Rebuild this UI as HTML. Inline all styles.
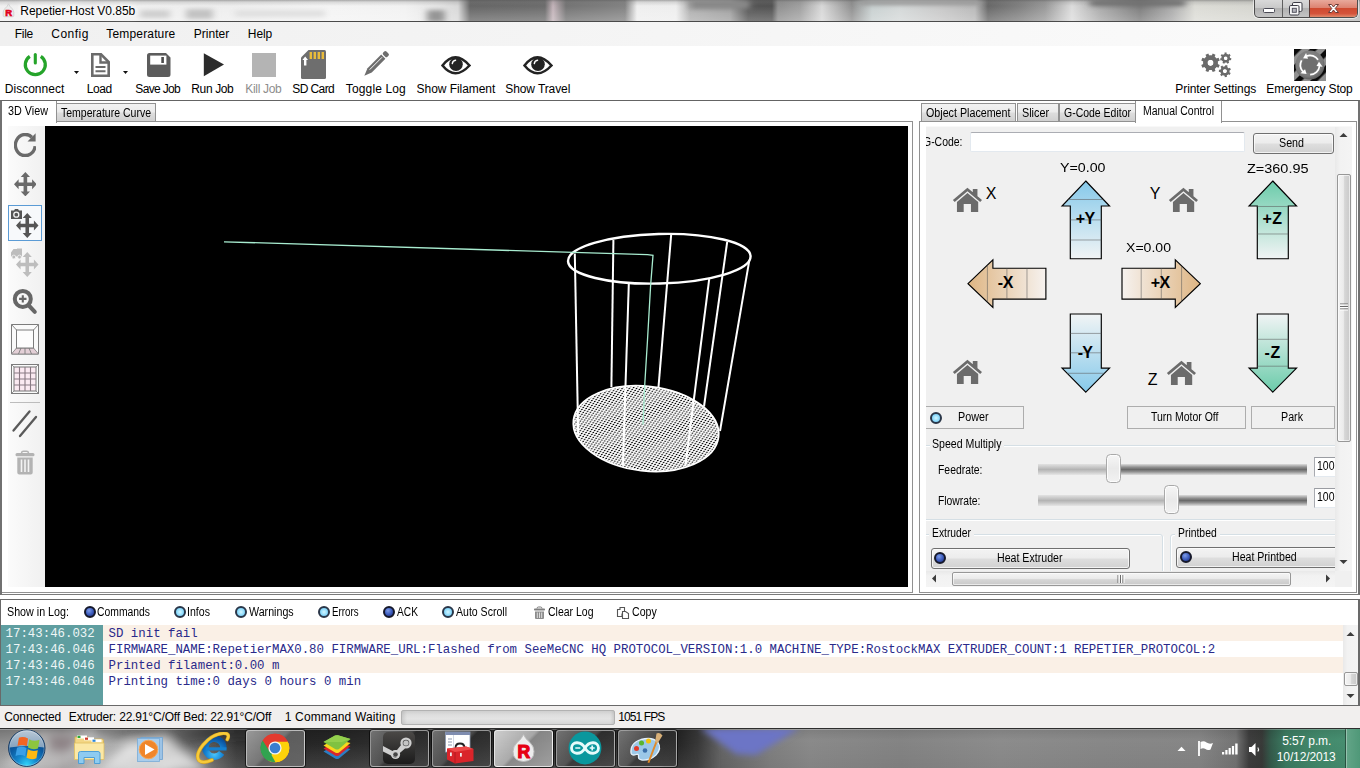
<!DOCTYPE html>
<html><head><meta charset="utf-8"><title>Repetier-Host V0.85b</title>
<style>
*{box-sizing:border-box;margin:0;padding:0}
html,body{width:1360px;height:768px;overflow:hidden;background:#fff}
body{position:relative;font-family:"Liberation Sans",sans-serif;font-size:12px;color:#000}
.a{position:absolute;display:block}
.t{position:absolute;white-space:pre;line-height:1;display:block}

</style></head><body>
<!-- TITLE -->
<div class="a" style="left:0px;top:0px;width:1360px;height:21px;background:linear-gradient(to bottom,rgba(90,90,90,.50) 0,rgba(120,120,120,.22) 2px,rgba(255,255,255,0) 6px,rgba(255,255,255,.22) 20px),linear-gradient(to right,#f0f0f0 0,#f3f3f3 60px,#f0f0f0 140px,#eeeeee 230px,#f4f4f4 330px,#f2f2f2 405px,#e4e4e4 440px,#d8d8d8 458px,#666666 470px,#6c6c6c 545px,#c4b4ba 553px,#747474 566px,#828282 625px,#efefef 637px,#eeeeee 676px,#b0b0b0 690px,#a0a0a0 730px,#545454 748px,#525252 772px,#909090 778px,#a0a0a0 800px,#d8d8d8 822px,#909090 852px,#c8d0d0 872px,#d4d8d8 900px,#c8c8c8 940px,#b8b8b8 975px,#686868 988px,#808080 1020px,#999 1045px,#dcdcdc 1072px,#aaa 1100px,#7c7c7c 1140px,#aaa 1172px,#dcdcd6 1195px,#d6d6d0 1250px,#b8b8b8 1360px)"></div>
<svg class="a" style="left:0;top:0" width="1360" height="21" viewBox="0 0 1360 21"><defs><filter id="tbl" x="-10%" y="-100%" width="120%" height="300%"><feGaussianBlur stdDeviation="3.5 2"/></filter></defs><g filter="url(#tbl)"><rect x="140" y="10" width="30" height="8" fill="#cfcfcf"/><rect x="186" y="9" width="27" height="10" fill="#c2c2c2"/><rect x="235" y="10" width="90" height="7" fill="#e0e0e0"/><rect x="427" y="10" width="18" height="12" fill="#959595"/><rect x="690" y="0" width="60" height="9" fill="#888"/><rect x="1090" y="0" width="95" height="6" fill="#707070"/><rect x="860" y="0" width="120" height="5" fill="#999"/></g></svg>
<div class="a" style="left:0px;top:21px;width:1360px;height:1px;background:#4a4a4a"></div>
<svg class="a" style="left:2px;top:3px;" width="13" height="15" viewBox="0 0 13 15"><path d="M6.500 0.800 Q7.500 3.500 10 5.500 Q11.800 7.300 11.800 9.500 V12.500 a1.200 1.200 0 0 1 -1.200 1.200 H2.400 a1.200 1.200 0 0 1 -1.200 -1.200 V9.500 Q1.200 7.300 3 5.500 Q5.500 3.500 6.500 0.800 Z" fill="#ebebeb" stroke="#c8c8c8" stroke-width=".7"/><text x="6.600" y="12.800" font-family="Liberation Sans,sans-serif" font-weight="bold" font-size="9.500" fill="#e2001a" stroke="#e2001a" stroke-width=".6" text-anchor="middle">R</text></svg>
<span class="t" style="left:20.30px;top:4.84px;font-size:12px;letter-spacing:-0.021px;text-shadow:0 0 5px #fff,0 0 7px #fff,0 0 9px #fff,0 0 12px #fff;">Repetier-Host V0.85b</span>
<div class="a" style="left:1254px;top:0px;width:104px;height:18px;border:1px solid #4d4d4d;border-top:0;border-radius:0 0 5px 5px;overflow:hidden;background:linear-gradient(#d9d9d9 0,#c9c9c9 45%,#b2b2b2 50%,#c4c4c4 100%);box-shadow:0 0 0 1px rgba(255,255,255,.55)"></div>
<div class="a" style="left:1309px;top:0px;width:48px;height:17px;border-radius:0 0 4px 0;background:linear-gradient(#e8a99b 0,#dd8371 45%,#cf4a30 50%,#d4533a 80%,#e08a6c 100%);border-left:1px solid #5a3a36"></div>
<div class="a" style="left:1282px;top:0px;width:1px;height:17px;background:#5f5f5f"></div>
<div class="a" style="left:1263px;top:8px;width:12px;height:5px;background:#fff;border:1px solid #4a4a55;border-radius:1.500px"></div>
<svg class="a" style="left:1288.5px;top:1.5px;" width="15" height="14" viewBox="0 0 15 14"><rect x="3.500" y="0.500" width="9.500" height="9" rx="1.300" fill="#ececec" stroke="#3c3c46" stroke-width="1"/><rect x="5" y="2" width="6.500" height="6" fill="none" stroke="#fff" stroke-width="1.100"/><rect x="0.500" y="3.500" width="9.500" height="9.500" rx="1.300" fill="#f6f6f6" stroke="#3c3c46" stroke-width="1"/><rect x="3.300" y="6.300" width="4" height="4" fill="#b4b4bc" stroke="#4a4a55" stroke-width=".9"/></svg>
<svg class="a" style="left:1327px;top:3px;" width="13" height="11" viewBox="0 0 13 11"><path d="M1.5 1.5 H4.5 L6.5 4 L8.5 1.5 H11.5 L8.2 5.5 L11.5 9.5 H8.5 L6.5 7 L4.5 9.5 H1.5 L4.8 5.5 Z" fill="#fff" stroke="#6a3a36" stroke-width="1"/></svg>
<!-- MENU -->
<div class="a" style="left:0px;top:22px;width:1360px;height:24px;background:linear-gradient(to right,#f0f0f0 0,#f4f4f4 40%,#fbfbfb 100%)"></div>
<span class="t" style="left:14.80px;top:27.84px;font-size:12px;letter-spacing:-0.281px;">File</span>
<span class="t" style="left:51.30px;top:27.84px;font-size:12px;letter-spacing:0.463px;">Config</span>
<span class="t" style="left:106.30px;top:27.84px;font-size:12px;letter-spacing:0.163px;">Temperature</span>
<span class="t" style="left:193.80px;top:27.84px;font-size:12px;letter-spacing:0.026px;">Printer</span>
<span class="t" style="left:247.80px;top:27.84px;font-size:12px;letter-spacing:-0.062px;">Help</span>
<!-- TOOLBAR -->
<div class="a" style="left:0px;top:46px;width:1360px;height:54px;background:#fff"></div>
<span class="t" style="left:4.80px;top:82.84px;font-size:12px;letter-spacing:0.014px;color:#000;">Disconnect</span>
<span class="t" style="left:86.80px;top:82.84px;font-size:12px;letter-spacing:-0.401px;color:#000;">Load</span>
<span class="t" style="left:135.30px;top:82.84px;font-size:12px;letter-spacing:-0.650px;color:#000;">Save Job</span>
<span class="t" style="left:191.30px;top:82.84px;font-size:12px;letter-spacing:-0.367px;color:#000;">Run Job</span>
<span class="t" style="left:245.30px;top:82.84px;font-size:12px;letter-spacing:-0.312px;color:#8d8d8d;">Kill Job</span>
<span class="t" style="left:292.30px;top:82.84px;font-size:12px;letter-spacing:-0.586px;color:#000;">SD Card</span>
<span class="t" style="left:345.80px;top:82.84px;font-size:12px;letter-spacing:0.142px;color:#000;">Toggle Log</span>
<span class="t" style="left:416.60px;top:82.84px;font-size:12px;letter-spacing:-0.056px;color:#000;">Show Filament</span>
<span class="t" style="left:505.30px;top:82.84px;font-size:12px;letter-spacing:-0.103px;color:#000;">Show Travel</span>
<span class="t" style="left:1175.30px;top:82.84px;font-size:12px;letter-spacing:-0.070px;color:#000;">Printer Settings</span>
<span class="t" style="left:1266.30px;top:82.84px;font-size:12px;letter-spacing:-0.171px;color:#000;">Emergency Stop</span>
<svg class="a" style="left:22px;top:51px;" width="28" height="28" viewBox="0 0 28 28"><path d="M7.800 5.300 A10 10 0 1 0 18.800 5.300" fill="none" stroke="#25a42a" stroke-width="3.200" stroke-linecap="butt"/><path d="M13.300 3.500 V12" stroke="#25a42a" stroke-width="3.100" stroke-linecap="round"/></svg>
<svg class="a" style="left:72.5px;top:70px;" width="7" height="5" viewBox="0 0 7 5"><path d="M1 1 H6 L3.5 4 Z" fill="#111"/></svg>
<svg class="a" style="left:121.5px;top:70px;" width="7" height="5" viewBox="0 0 7 5"><path d="M1 1 H6 L3.5 4 Z" fill="#111"/></svg>
<svg class="a" style="left:90px;top:52px;" width="22" height="26" viewBox="0 0 22 26"><path d="M2.3 2.3 H11 L18.7 10 V23.7 H2.3 Z" fill="#fff" stroke="#6b6b6b" stroke-width="2.6" stroke-linejoin="miter"/><path d="M10.5 2.5 V10.5 H18.5" fill="none" stroke="#6b6b6b" stroke-width="2.4"/><path d="M5.5 15 H15.5 M5.5 19.2 H15.5" stroke="#6b6b6b" stroke-width="2"/></svg>
<svg class="a" style="left:146px;top:52px;" width="26" height="26" viewBox="0 0 26 26"><path d="M1 3.5 a2.5 2.5 0 0 1 2.500 -2.5 H20 L24.500 5.5 V22.5 a2.500 2.500 0 0 1 -2.500 2.500 H3.500 a2.500 2.500 0 0 1 -2.500 -2.500 Z" fill="#5c5c5c"/><rect x="4.2" y="3.6" width="16.2" height="9" fill="#fff"/><rect x="15.3" y="5" width="2.6" height="6" fill="#4a4a4a"/></svg>
<svg class="a" style="left:202px;top:52px;" width="24" height="26" viewBox="0 0 24 26"><path d="M1.8 1.2 L22 12.6 L1.8 24.2 Z" fill="#2b2b2b"/></svg>
<div class="a" style="left:252px;top:53px;width:24px;height:24px;background:#b4b4b4"></div>
<svg class="a" style="left:300px;top:49px;" width="27" height="31" viewBox="0 0 27 31"><path d="M8.5 1 H24.500 a1.5 1.5 0 0 1 1.500 1.500 V28.5 a1.5 1.5 0 0 1 -1.500 1.500 H2.500 a1.500 1.500 0 0 1 -1.500 -1.500 V8.5 Z" fill="#6e6e6e"/><path d="M9.6 3 h2.400 v7 h-2.400z M13.600 3 h2.400 v7 h-2.400z M17.600 3 h2.400 v7 h-2.400z M21.600 3 h2.400 v7 h-2.400z" fill="#e9bb3a"/><path d="M5.200 7.5 L8 11 H6.400 V16.500 H4 V11 H2.400 Z" fill="#fff"/></svg>
<svg class="a" style="left:362px;top:50px;" width="28" height="28" viewBox="0 0 28 28"><g transform="rotate(45 14 14)" fill="#6e6e6e"><rect x="11" y="-2.2" width="6" height="4.600" rx="1.600"/><path d="M11 3.700 H17 V23 L14 30.500 L11 23 Z"/><path d="M13.500 5 V22.500" stroke="#fff" stroke-width=".9" fill="none"/></g></svg>
<svg class="a" style="left:441px;top:55px;" width="30" height="21" viewBox="0 0 30 21"><path d="M1.500 10.500 Q14 -6 28.500 10.500 Q14 26 1.500 10.500 Z" fill="#fff" stroke="#232323" stroke-width="2.500"/><circle cx="15" cy="9.300" r="6.800" fill="#232323"/><path d="M11.300 8.600 A3.800 3.800 0 0 1 14.600 5.200" fill="none" stroke="#fff" stroke-width="1.400" stroke-linecap="round"/></svg>
<svg class="a" style="left:523px;top:55px;" width="30" height="21" viewBox="0 0 30 21"><path d="M1.500 10.500 Q14 -6 28.500 10.500 Q14 26 1.500 10.500 Z" fill="#fff" stroke="#232323" stroke-width="2.500"/><circle cx="15" cy="9.300" r="6.800" fill="#232323"/><path d="M11.300 8.600 A3.800 3.800 0 0 1 14.600 5.200" fill="none" stroke="#fff" stroke-width="1.400" stroke-linecap="round"/></svg>
<svg class="a" style="left:1200px;top:50px;" width="34" height="30" viewBox="0 0 34 30"><path fill-rule="evenodd" d="M17.69,14.06 L19.74,15.01 L18.59,17.77 L16.47,17.00 L14.70,18.77 L15.47,20.89 L12.71,22.04 L11.76,19.99 L9.24,19.99 L8.29,22.04 L5.53,20.89 L6.30,18.77 L4.53,17.00 L2.41,17.77 L1.26,15.01 L3.31,14.06 L3.31,11.54 L1.26,10.59 L2.41,7.83 L4.53,8.60 L6.30,6.83 L5.53,4.71 L8.29,3.56 L9.24,5.61 L11.76,5.61 L12.71,3.56 L15.47,4.71 L14.70,6.83 L16.47,8.60 L18.59,7.83 L19.74,10.59 L17.69,11.54 Z M13.6,12.8 a3.1,3.1 0 1 0 -6.2,0 a3.1,3.1 0 1 0 6.2,0 Z" fill="#6b6b6b"/><circle cx="10.5" cy="12.8" r="5.20" fill="none" stroke="#6b6b6b" stroke-width="4.20"/><path fill-rule="evenodd" d="M29.89,7.98 L31.40,8.31 L30.99,10.32 L29.48,10.03 L28.48,11.35 L29.17,12.72 L27.34,13.66 L26.62,12.30 L24.98,12.34 L24.33,13.73 L22.46,12.89 L23.07,11.48 L22.01,10.21 L20.52,10.57 L20.01,8.59 L21.50,8.19 L21.83,6.57 L20.61,5.63 L21.85,3.99 L23.09,4.91 L24.56,4.16 L24.54,2.62 L26.59,2.57 L26.64,4.11 L28.15,4.79 L29.34,3.81 L30.66,5.38 L29.49,6.39 Z M27.7,8.2 a2,2 0 1 0 -4,0 a2,2 0 1 0 4,0 Z" fill="#6b6b6b"/><circle cx="25.7" cy="8.2" r="3.10" fill="none" stroke="#6b6b6b" stroke-width="2.20"/><path fill-rule="evenodd" d="M29.26,22.21 L30.69,23.01 L29.64,24.94 L28.19,24.17 L26.75,25.20 L27.02,26.82 L24.85,27.20 L24.55,25.59 L22.85,25.11 L21.75,26.32 L20.10,24.87 L21.17,23.62 L20.49,21.99 L18.85,21.89 L18.96,19.70 L20.60,19.76 L21.45,18.21 L20.51,16.86 L22.30,15.58 L23.27,16.91 L25.01,16.60 L25.48,15.03 L27.59,15.62 L27.16,17.21 L28.49,18.38 L30.01,17.76 L30.86,19.79 L29.35,20.44 Z M27.099999999999998,21.1 a2.2,2.2 0 1 0 -4.4,0 a2.2,2.2 0 1 0 4.4,0 Z" fill="#6b6b6b"/><circle cx="24.9" cy="21.1" r="3.35" fill="none" stroke="#6b6b6b" stroke-width="2.30"/></svg>
<svg class="a" style="left:1294px;top:49px;" width="32" height="32" viewBox="0 0 32 32"><defs><pattern id="esp" width="11.310" height="11.310" patternUnits="userSpaceOnUse" patternTransform="rotate(45)"><rect width="11.310" height="11.310" fill="#0a0a0a"/><rect x="5.300" width="6.010" height="11.310" fill="#909090"/></pattern><radialGradient id="esr" cx=".45" cy=".4" r=".6"><stop offset="0" stop-color="#8a8a8a"/><stop offset=".8" stop-color="#7a7a7a"/><stop offset="1" stop-color="#5c5c5c"/></radialGradient></defs><rect width="32" height="32" fill="url(#esp)"/><circle cx="15.900" cy="16" r="14.600" fill="url(#esr)"/><circle cx="16" cy="16" r="8.200" fill="#6e6e6e"/><g fill="none" stroke="#fff" stroke-width="1.700"><path d="M12.72 6.98 A9.6 9.6 0 0 1 24.05 10.77"/><path d="M25.55 17.00 A9.6 9.6 0 0 1 16.17 25.60"/><path d="M8.98 22.55 A9.6 9.6 0 0 1 7.60 11.35"/></g><g fill="#fff"><path d="M13.99 9.82 L12.08 3.92 L9.09 9.33 Z"/><path d="M22.44 16.90 L28.58 17.77 L25.02 12.72 Z"/><path d="M11.09 20.26 L6.42 24.33 L12.56 24.96 Z"/></g></svg>
<!-- LEFT -->
<div class="a" style="left:0px;top:100px;width:1360px;height:495px;border:1px solid #7a7a7a;border-top:1px solid #646464;border-left:2px solid #717171;border-right:2px solid #717171;background:#fff"></div>
<div class="a" style="left:2px;top:121px;width:911px;height:472px;border:1px solid #919191;border-left:0;background:#fff"></div>
<div class="a" style="left:2px;top:101px;width:55px;height:22px;background:#fff;border-right:1px solid #919191"></div>
<span class="t" style="left:8.30px;top:104.84px;font-size:12px;transform:scaleX(0.8995);transform-origin:0 0;">3D View</span>
<div class="a" style="left:56px;top:103px;width:100px;height:19px;border:1px solid #919191;background:linear-gradient(#f2f2f2 0,#ebebeb 48%,#dddddd 52%,#d0d0d0 100%)"></div>
<span class="t" style="left:61.30px;top:106.84px;font-size:12px;transform:scaleX(0.8762);transform-origin:0 0;">Temperature Curve</span>
<div class="a" style="left:8px;top:126px;width:37px;height:461px;background:linear-gradient(to right,#fbfbfb,#f0f0f0)"></div>
<svg class="a" style="left:13.5px;top:132.9px;" width="22.6" height="24.1" viewBox="0 0 24 24" preserveAspectRatio="none"><path d="M19.030 4.200 A10.500 10.500 0 1 0 22.440 13.100" fill="none" stroke="#6a6a6a" stroke-width="3.500"/><path d="M23 0.200 V8.400 H14.350 Z" fill="#6a6a6a"/></svg>
<svg class="a" style="left:13.5px;top:171.9px;" width="22.75" height="24.4" viewBox="0 0 22.600 24.400" preserveAspectRatio="none"><path fill="#6a6a6a" d="M11.300 0 L15.900 5 H13.100 V10.400 H18 V7.200 L22.600 12.200 L18 17.200 V14 H13.100 V19.400 H15.900 L11.300 24.400 L6.700 19.400 H9.500 V14 H4.600 V17.200 L0 12.200 L4.600 7.200 V10.400 H9.500 V5 H6.700 Z"/></svg>
<div class="a" style="left:8px;top:205px;width:34px;height:36px;border:1px solid #5b9bd5;background:#f7f9fb"></div>
<svg class="a" style="left:16px;top:213px;" width="22.5" height="25" viewBox="0 0 22.600 24.400" preserveAspectRatio="none"><path fill="#555" d="M11.300 0 L15.900 5 H13.100 V10.400 H18 V7.200 L22.600 12.200 L18 17.200 V14 H13.100 V19.400 H15.900 L11.300 24.400 L6.700 19.400 H9.500 V14 H4.600 V17.200 L0 12.200 L4.600 7.200 V10.400 H9.500 V5 H6.700 Z"/></svg>
<svg class="a" style="left:9.8px;top:207.7px;" width="13" height="12" viewBox="0 0 13 12"><path d="M1 2.500 H4 L5 1 H8 L9 2.500 H12 V11 H1 Z" fill="#555"/><circle cx="6.300" cy="6.700" r="2.500" fill="none" stroke="#f4f4f4" stroke-width="1.300"/></svg>
<svg class="a" style="left:16px;top:252.3px;" width="22.5" height="25" viewBox="0 0 22.600 24.400" preserveAspectRatio="none"><path fill="#bdbdbd" d="M11.300 0 L15.900 5 H13.100 V10.400 H18 V7.200 L22.600 12.200 L18 17.200 V14 H13.100 V19.400 H15.900 L11.300 24.400 L6.700 19.400 H9.500 V14 H4.600 V17.200 L0 12.200 L4.600 7.200 V10.400 H9.500 V5 H6.700 Z"/></svg>
<svg class="a" style="left:9.8px;top:248px;" width="13" height="12" viewBox="0 0 13 12"><path d="M1 4.500 L3.500 1 H7 V0.500 H12 V8.500 H1 Z" fill="#bdbdbd"/><circle cx="3.800" cy="9" r="1.900" fill="#bdbdbd" stroke="#f4f4f4" stroke-width=".8"/><circle cx="9.500" cy="9" r="1.900" fill="#bdbdbd" stroke="#f4f4f4" stroke-width=".8"/></svg>
<svg class="a" style="left:11px;top:286px;" width="28" height="30" viewBox="0 0 28 30"><circle cx="11.800" cy="12.900" r="8" fill="none" stroke="#666" stroke-width="4"/><path d="M17.800 19.500 L23.800 25.800" stroke="#666" stroke-width="4" stroke-linecap="round"/><path d="M11.800 9.200 V16.600 M8.100 12.900 H15.500" stroke="#666" stroke-width="2.100"/></svg>
<svg class="a" style="left:10px;top:323px;" width="30" height="33" viewBox="0 0 30 33"><path d="M1.500 1.500 H28.500 V31 H1.500 Z" fill="#fafafa" stroke="#7c7c7c" stroke-width="1"/><path d="M1.500 25 L6.500 25 L23.500 25 L28.500 31 H1.500 L6.500 25" fill="#e8d6dc" stroke="none"/><path d="M1.500 31 L6.500 25 H23.500 L28.500 31 Z" fill="#e3cfd6" stroke="#7c7c7c" stroke-width=".8"/><rect x="6.500" y="7" width="17" height="18" fill="#fdfdfd" stroke="#7c7c7c" stroke-width="1"/><path d="M1.500 1.500 L6.500 7 M28.500 1.500 L23.500 7 M11 25 L8.500 31 M15 25 V31 M19 25 L21.500 31" stroke="#7c7c7c" stroke-width=".9" fill="none"/></svg>
<svg class="a" style="left:10px;top:363px;" width="30" height="32" viewBox="0 0 30 32"><rect x="1.500" y="1.500" width="27" height="29" fill="#fbfbfb" stroke="#7c7c7c" stroke-width="1"/><rect x="4" y="4" width="22" height="24" fill="#fbeaf2" stroke="#777" stroke-width="1"/><path d="M1.500 1.500 L4 4 M28.500 1.500 L26 4 M1.500 30.500 L4 28 M28.500 30.500 L26 28" stroke="#7c7c7c" stroke-width=".8"/><path d="M9.500 4 V28 M15 4 V28 M20.500 4 V28 M4 10 H26 M4 16 H26 M4 22 H26" stroke="#8a7a84" stroke-width="1.100" fill="none"/></svg>
<div class="a" style="left:10px;top:402px;width:30px;height:1px;background:#bcbcbc"></div>
<svg class="a" style="left:11px;top:409px;" width="28" height="30" viewBox="0 0 28 30"><path d="M2.500 21.500 L18.500 2.500 M9 27 L25 8" stroke="#5a5a5a" stroke-width="2.300" stroke-linecap="round"/></svg>
<svg class="a" style="left:14px;top:450px;" width="22" height="26" viewBox="0 0 22 26"><path d="M7.500 3 a2 2 0 0 1 2 -1.800 h3 a2 2 0 0 1 2 1.800" fill="none" stroke="#b3b3b3" stroke-width="1.500"/><rect x="1.500" y="3" width="19" height="3.200" rx="1.500" fill="#b3b3b3"/><path d="M3.300 7.500 H18.700 V22.500 a2 2 0 0 1 -2 2 H5.300 a2 2 0 0 1 -2 -2 Z" fill="#b3b3b3"/><path d="M7.500 9.500 V22 M11 9.500 V22 M14.500 9.500 V22" stroke="#f4f4f4" stroke-width="1.600"/></svg>
<!-- VIEW3D -->
<div class="a" style="left:45px;top:126px;width:863px;height:461px;background:#000"></div>
<svg class="a" style="left:45px;top:126px" width="863" height="461" viewBox="45 126 863 461"><defs><pattern id="gr" width="1" height="1" patternUnits="userSpaceOnUse" patternTransform="matrix(2.960 0.592 -1.210 2.100 0 0)"><rect width="1" height="1" fill="#fff"/><rect x=".22" y=".27" width=".55" height=".46" fill="#000"/></pattern></defs><ellipse cx="646" cy="428.600" rx="73" ry="42.300" transform="rotate(6.600 646 428.600)" fill="url(#gr)" stroke="#fff" stroke-width="1.800"/><path d="M529.8 127.6 L533.2 309.7" stroke="#fff" stroke-width="2" fill="none" transform="translate(45 126)"/><path d="M568.4 114.0 L566.4 261.0" stroke="#fff" stroke-width="2" fill="none" transform="translate(45 126)"/><path d="M583.8 158.0 L577.9 339.8" stroke="#fff" stroke-width="2" fill="none" transform="translate(45 126)"/><path d="M626.2 108.4 L613.5 261.0" stroke="#fff" stroke-width="2" fill="none" transform="translate(45 126)"/><path d="M664.2 153.0 L640.4 339.8" stroke="#fff" stroke-width="2" fill="none" transform="translate(45 126)"/><path d="M682.2 115.9 L659.0 280.5" stroke="#fff" stroke-width="2" fill="none" transform="translate(45 126)"/><path d="M704.4 133.8 L675.0 305.0" stroke="#fff" stroke-width="2" fill="none" transform="translate(45 126)"/><ellipse cx="659.300" cy="258.750" rx="91.300" ry="24.800" transform="rotate(-1.500 659.300 258.750)" fill="none" stroke="#fff" stroke-width="2.400"/><path d="M224 241.800 L647.500 254.700 L653 255.300 L650.600 285.600 L647.500 340 L644.800 383.750 L643 424.800" fill="none" stroke="#a8ecd0" stroke-width="1.300"/></svg>
<!-- RIGHT -->
<div class="a" style="left:919px;top:121px;width:438px;height:472px;border:1px solid #919191;background:#fff"></div>
<div class="a" style="left:921px;top:103px;width:95px;height:19px;border:1px solid #919191;background:linear-gradient(#f2f2f2 0,#ebebeb 48%,#dddddd 52%,#d0d0d0 100%)"></div>
<span class="t" style="left:925.80px;top:106.84px;font-size:12px;transform:scaleX(0.8921);transform-origin:0 0;">Object Placement</span>
<div class="a" style="left:1017px;top:103px;width:42px;height:19px;border:1px solid #919191;background:linear-gradient(#f2f2f2 0,#ebebeb 48%,#dddddd 52%,#d0d0d0 100%)"></div>
<span class="t" style="left:1022.30px;top:106.84px;font-size:12px;transform:scaleX(0.8995);transform-origin:0 0;">Slicer</span>
<div class="a" style="left:1059px;top:103px;width:78px;height:19px;border:1px solid #919191;background:linear-gradient(#f2f2f2 0,#ebebeb 48%,#dddddd 52%,#d0d0d0 100%)"></div>
<span class="t" style="left:1064.30px;top:106.84px;font-size:12px;transform:scaleX(0.8735);transform-origin:0 0;">G-Code Editor</span>
<div class="a" style="left:1135px;top:101px;width:87px;height:22px;background:#fff;border:1px solid #919191;border-top:0;border-bottom:0"></div>
<span class="t" style="left:1142.80px;top:104.84px;font-size:12px;transform:scaleX(0.8725);transform-origin:0 0;">Manual Control</span>
<div class="a" style="left:926px;top:126px;width:426px;height:461px;background:#f0f0f0;border-top:1px solid #f8f8f8"></div>
<div class="a" style="left:926px;top:127px;width:409px;height:444px;overflow:hidden"><span class="t" style="left:-3.20px;top:8.84px;font-size:12px;transform:scaleX(0.8708);transform-origin:0 0;">G-Code:</span><div class="a" style="left:44px;top:5px;width:275px;height:20px;background:#fff;border:1px solid #e3e9ef;border-top-color:#abadb3;border-radius:2px"></div><div class="a" style="left:327px;top:6px;width:81px;height:21px;border:1px solid #707070;border-radius:3px;background:linear-gradient(#f3f3f3 0,#ececec 48%,#dedede 52%,#d1d1d1 100%);box-shadow:inset 0 0 0 1px rgba(255,255,255,.7)"></div><span class="t" style="left:353.30px;top:10.34px;font-size:12px;transform:scaleX(0.8919);transform-origin:0 0;">Send</span><span class="t" style="left:134.30px;top:34.30px;font-size:13px;transform:scaleX(1.0943);transform-origin:0 0;">Y=0.00</span><span class="t" style="left:321.30px;top:34.50px;font-size:13px;transform:scaleX(1.1122);transform-origin:0 0;">Z=360.95</span><span class="t" style="left:200.30px;top:113.60px;font-size:13px;transform:scaleX(1.0823);transform-origin:0 0;">X=0.00</span><span class="t" style="left:59.80px;top:59.46px;font-size:16px;letter-spacing:1.828px;">X</span><span class="t" style="left:223.80px;top:59.46px;font-size:16px;letter-spacing:1.828px;">Y</span><span class="t" style="left:221.80px;top:244.86px;font-size:16px;letter-spacing:1.719px;">Z</span><svg class="a" style="left:27.299999999999955px;top:61px;overflow:visible" width="29" height="24" viewBox="0 0 29 24"><path d="M14.450 -0.300 L29 11.900 L27.200 13.900 L14.450 3.300 L1.700 13.900 L-0.100 11.900 Z M19.800 0.900 H24.450 V9.500 L19.800 5.300 Z" fill="#6b6b6b"/><path d="M14.450 5 L25.200 14 V24 H17.950 V16.100 H10.700 V24 H3.950 V14 Z" fill="#6b6b6b"/></svg><svg class="a" style="left:243.4000000000001px;top:61px;overflow:visible" width="29" height="24" viewBox="0 0 29 24"><path d="M14.450 -0.300 L29 11.900 L27.200 13.900 L14.450 3.300 L1.700 13.900 L-0.100 11.900 Z M19.800 0.900 H24.450 V9.500 L19.800 5.300 Z" fill="#6b6b6b"/><path d="M14.450 5 L25.200 14 V24 H17.950 V16.100 H10.700 V24 H3.950 V14 Z" fill="#6b6b6b"/></svg><svg class="a" style="left:27.200000000000045px;top:232.8px;overflow:visible" width="29" height="24" viewBox="0 0 29 24"><path d="M14.450 -0.300 L29 11.900 L27.200 13.900 L14.450 3.300 L1.700 13.900 L-0.100 11.900 Z M19.800 0.900 H24.450 V9.500 L19.800 5.300 Z" fill="#6b6b6b"/><path d="M14.450 5 L25.200 14 V24 H17.950 V16.100 H10.700 V24 H3.950 V14 Z" fill="#6b6b6b"/></svg><svg class="a" style="left:241px;top:233.60000000000002px;overflow:visible" width="29" height="24" viewBox="0 0 29 24"><path d="M14.450 -0.300 L29 11.900 L27.200 13.900 L14.450 3.300 L1.700 13.900 L-0.100 11.900 Z M19.800 0.900 H24.450 V9.500 L19.800 5.300 Z" fill="#6b6b6b"/><path d="M14.450 5 L25.200 14 V24 H17.950 V16.100 H10.700 V24 H3.950 V14 Z" fill="#6b6b6b"/></svg><svg class="a" style="left:133.2px;top:50.5px" width="53.5" height="83.8" viewBox="1059.2 177.5 53.5 83.8"><defs><linearGradient id="ay1" x1="0" y1="0" x2="0" y2="1"><stop offset="0" stop-color="#86c9ea"/><stop offset="1" stop-color="#f1f4f5"/></linearGradient></defs><path d="M1086 180.5 L1109.75 205.5 H1101.5 V258.3 H1070.5 V205.5 H1062.25 Z" fill="url(#ay1)" stroke="#000" stroke-width="1.150" stroke-linejoin="miter"/><path d="M1068.4 199 H1103.6 M1070.5 219.4 H1101.5 M1070.5 239.5 H1101.5 " stroke="rgba(90,90,90,.6)" stroke-width=".9" fill="none"/></svg><svg class="a" style="left:320.2px;top:50.5px" width="53.5" height="83.8" viewBox="1246.2 177.5 53.5 83.8"><defs><linearGradient id="az1" x1="0" y1="0" x2="0" y2="1"><stop offset="0" stop-color="#6bcbaa"/><stop offset="1" stop-color="#f1f4f5"/></linearGradient></defs><path d="M1273 180.5 L1296.75 205.5 H1288.5 V258.3 H1257.5 V205.5 H1249.25 Z" fill="url(#az1)" stroke="#000" stroke-width="1.150" stroke-linejoin="miter"/><path d="M1257.5 206 H1288.5 M1257.5 233.5 H1288.5 " stroke="rgba(90,90,90,.6)" stroke-width=".9" fill="none"/></svg><svg class="a" style="left:133.2px;top:184.2px" width="53.5" height="84.1" viewBox="1059.2 311.2 53.5 84.1"><defs><linearGradient id="ay2" x1="0" y1="0" x2="0" y2="1"><stop offset="0" stop-color="#f1f4f5"/><stop offset="1" stop-color="#86c9ea"/></linearGradient></defs><path d="M1086 392.3 L1109.75 368.4 H1101.5 V314.2 H1070.5 V368.4 H1062.25 Z" fill="url(#ay2)" stroke="#000" stroke-width="1.150" stroke-linejoin="miter"/><path d="M1070.5 333.6 H1101.5 M1070.5 353 H1101.5 M1067.3 373.5 H1104.7 " stroke="rgba(90,90,90,.6)" stroke-width=".9" fill="none"/></svg><svg class="a" style="left:320.2px;top:184.2px" width="53.5" height="84.1" viewBox="1246.2 311.2 53.5 84.1"><defs><linearGradient id="az2" x1="0" y1="0" x2="0" y2="1"><stop offset="0" stop-color="#f1f4f5"/><stop offset="1" stop-color="#6bcbaa"/></linearGradient></defs><path d="M1273 392.3 L1296.75 368.4 H1288.5 V314.2 H1257.5 V368.4 H1249.25 Z" fill="url(#az2)" stroke="#000" stroke-width="1.150" stroke-linejoin="miter"/><path d="M1257.5 339.5 H1288.5 M1257.5 366.4 H1288.5 " stroke="rgba(90,90,90,.6)" stroke-width=".9" fill="none"/></svg><svg class="a" style="left:38.6px;top:129.8px" width="83.9" height="53.5" viewBox="964.6 256.8 83.9 53.5"><defs><linearGradient id="ax1" x1="0" y1="0" x2="1" y2="0"><stop offset="0" stop-color="#deb583"/><stop offset="1" stop-color="#f6f2ef"/></linearGradient></defs><path d="M967.6 283.5 L992.5 259.75 V268.0 H1045.5 V299.0 H992.5 V307.25 Z" fill="url(#ax1)" stroke="#000" stroke-width="1.150" stroke-linejoin="miter"/><path d="M987 265.0 V302.0 M1006.5 268.0 V299.0 M1026.6 268.0 V299.0 " stroke="rgba(90,90,90,.6)" stroke-width=".9" fill="none"/></svg><svg class="a" style="left:193.3px;top:129.8px" width="84.3" height="53.5" viewBox="1119.3 256.8 84.3 53.5"><defs><linearGradient id="ax2" x1="0" y1="0" x2="1" y2="0"><stop offset="0" stop-color="#f6f2ef"/><stop offset="1" stop-color="#deb583"/></linearGradient></defs><path d="M1200.6 283.5 L1175.6 259.75 V268.0 H1122.3 V299.0 H1175.6 V307.25 Z" fill="url(#ax2)" stroke="#000" stroke-width="1.150" stroke-linejoin="miter"/><path d="M1141.5 268.0 V299.0 M1161.6 268.0 V299.0 M1181.9 265.7 V301.3 " stroke="rgba(90,90,90,.6)" stroke-width=".9" fill="none"/></svg><span class="t" style="left:149.80px;top:84.16px;font-size:16px;letter-spacing:-0.516px;font-weight:bold;">+Y</span><span class="t" style="left:336.60px;top:84.16px;font-size:16px;letter-spacing:0.375px;font-weight:bold;">+Z</span><span class="t" style="left:151.80px;top:218.16px;font-size:16px;letter-spacing:-1.000px;font-weight:bold;">-Y</span><span class="t" style="left:338.60px;top:218.16px;font-size:16px;letter-spacing:0.491px;font-weight:bold;">-Z</span><span class="t" style="left:71.80px;top:148.06px;font-size:16px;letter-spacing:-0.500px;font-weight:bold;">-X</span><span class="t" style="left:224.80px;top:148.06px;font-size:16px;letter-spacing:-0.516px;font-weight:bold;">+X</span><div class="a" style="left:-26px;top:279px;width:124px;height:23px;border:1px solid #adadad;background:#f0f0f0"></div><div class="a" style="left:201px;top:279px;width:119px;height:23px;border:1px solid #adadad;background:#f0f0f0"></div><div class="a" style="left:325px;top:279px;width:84px;height:23px;border:1px solid #adadad;background:#f0f0f0"></div><span class="t" style="left:31.80px;top:284.34px;font-size:12px;transform:scaleX(0.8966);transform-origin:0 0;">Power</span><span class="t" style="left:225.30px;top:284.34px;font-size:12px;transform:scaleX(0.8726);transform-origin:0 0;">Turn Motor Off</span><span class="t" style="left:354.80px;top:284.34px;font-size:12px;transform:scaleX(0.8911);transform-origin:0 0;">Park</span><div class="a" style="left:4px;top:285px;width:12px;height:12px;border-radius:50%;border:2px solid #2a3648;background:radial-gradient(circle at 50% 50%,#d4f6ff 0,#8fdcfc 55%,#5fb4e8 100%)"></div><div class="a" style="left:-6px;top:318px;width:430px;height:75px;border:1px solid #d5dfe5;border-radius:3px;box-shadow:inset 1px 1px 0 #fff,1px 1px 0 #fff"></div><div class="a" style="left:4px;top:311px;width:74px;height:14px;background:#f0f0f0"></div><span class="t" style="left:6.30px;top:311.34px;font-size:12px;transform:scaleX(0.8829);transform-origin:0 0;">Speed Multiply</span><span class="t" style="left:11.80px;top:336.84px;font-size:12px;transform:scaleX(0.8662);transform-origin:0 0;">Feedrate:</span><span class="t" style="left:11.80px;top:367.84px;font-size:12px;transform:scaleX(0.8610);transform-origin:0 0;">Flowrate:</span><div class="a" style="left:111.5px;top:336.5px;width:75.5px;height:11px;background:linear-gradient(#e2e2e2 0,#c2c2c2 35%,#b4b4b4 50%,#c6c6c6 70%,#e6e6e6 100%)"></div><div class="a" style="left:187px;top:336.5px;width:194.29999999999995px;height:11px;background:linear-gradient(#dcdcdc 0,#8e8e8e 30%,#6a6a6a 50%,#909090 70%,#e0e0e0 100%)"></div><div class="a" style="left:111.5px;top:367.5px;width:133.5px;height:11px;background:linear-gradient(#e2e2e2 0,#c2c2c2 35%,#b4b4b4 50%,#c6c6c6 70%,#e6e6e6 100%)"></div><div class="a" style="left:245px;top:367.5px;width:136.29999999999995px;height:11px;background:linear-gradient(#dcdcdc 0,#8e8e8e 30%,#6a6a6a 50%,#909090 70%,#e0e0e0 100%)"></div><div class="a" style="left:180px;top:327px;width:15px;height:29px;border:1px solid #a9a9a9;border-radius:4.500px;background:linear-gradient(#f6f6f6,#e9e9e9 50%,#f2f2f2);box-shadow:inset 0 0 0 1px rgba(255,255,255,.8)"></div><div class="a" style="left:238px;top:358px;width:15px;height:29px;border:1px solid #a9a9a9;border-radius:4.500px;background:linear-gradient(#f6f6f6,#e9e9e9 50%,#f2f2f2);box-shadow:inset 0 0 0 1px rgba(255,255,255,.8)"></div><div class="a" style="left:388px;top:330px;width:40px;height:20px;background:#fff;border:1px solid #e3e9ef;border-top-color:#9a9ca2;border-left-color:#a8aab0"></div><div class="a" style="left:388px;top:361px;width:40px;height:20px;background:#fff;border:1px solid #e3e9ef;border-top-color:#9a9ca2;border-left-color:#a8aab0"></div><span class="t" style="left:390.80px;top:332.84px;font-size:12px;transform:scaleX(0.8736);transform-origin:0 0;">100</span><span class="t" style="left:390.80px;top:363.54px;font-size:12px;transform:scaleX(0.8736);transform-origin:0 0;">100</span><div class="a" style="left:-6px;top:406.5px;width:243px;height:60px;border:1px solid #d5dfe5;border-radius:3px;box-shadow:inset 1px 1px 0 #fff,1px 1px 0 #fff"></div><div class="a" style="left:3px;top:400px;width:45px;height:14px;background:#f0f0f0"></div><span class="t" style="left:5.80px;top:400.14px;font-size:12px;transform:scaleX(0.8598);transform-origin:0 0;">Extruder</span><div class="a" style="left:244px;top:406.5px;width:200px;height:60px;border:1px solid #d5dfe5;border-radius:3px;box-shadow:inset 1px 1px 0 #fff,1px 1px 0 #fff"></div><div class="a" style="left:249px;top:400px;width:45px;height:14px;background:#f0f0f0"></div><span class="t" style="left:251.80px;top:400.14px;font-size:12px;transform:scaleX(0.8657);transform-origin:0 0;">Printbed</span><div class="a" style="left:5px;top:421px;width:199px;height:21px;border:1px solid #707070;border-radius:3px;background:linear-gradient(#f3f3f3 0,#ececec 48%,#dedede 52%,#d1d1d1 100%);box-shadow:inset 0 0 0 1px rgba(255,255,255,.7)"></div><div class="a" style="left:250px;top:420px;width:180px;height:21px;border:1px solid #707070;border-radius:3px;background:linear-gradient(#f3f3f3 0,#ececec 48%,#dedede 52%,#d1d1d1 100%);box-shadow:inset 0 0 0 1px rgba(255,255,255,.7)"></div><div class="a" style="left:8px;top:425px;width:12px;height:12px;border-radius:50%;border:2px solid #15182a;background:radial-gradient(circle at 38% 32%,#7d9be6 0,#3f5fc0 50%,#1b2c78 100%)"></div><div class="a" style="left:253.5px;top:424px;width:12px;height:12px;border-radius:50%;border:2px solid #15182a;background:radial-gradient(circle at 38% 32%,#7d9be6 0,#3f5fc0 50%,#1b2c78 100%)"></div><span class="t" style="left:70.80px;top:425.34px;font-size:12px;transform:scaleX(0.8846);transform-origin:0 0;">Heat Extruder</span><span class="t" style="left:305.80px;top:424.34px;font-size:12px;transform:scaleX(0.8816);transform-origin:0 0;">Heat Printbed</span></div>
<div class="a" style="left:1335px;top:127px;width:17px;height:444px;background:linear-gradient(to right,#e9e9e9,#f2f2f2 30%,#f4f4f4 100%)"></div>
<svg class="a" style="left:1339px;top:132px;" width="9" height="6" viewBox="0 0 9 6"><path d="M0.500 5 L4.500 1 L8.500 5 Z" fill="#3c3c3c"/></svg>
<svg class="a" style="left:1339px;top:559px;" width="9" height="6" viewBox="0 0 9 6"><path d="M0.500 1 L4.500 5 L8.500 1 Z" fill="#3c3c3c"/></svg>
<div class="a" style="left:1337px;top:174px;width:14px;height:268px;border:1px solid #979797;border-radius:2px;background:linear-gradient(to right,#f4f4f4 0,#ebebeb 45%,#d6d6d6 55%,#c9c9c9 100%);box-shadow:inset 0 0 0 1px rgba(255,255,255,.6)"></div>
<svg class="a" style="left:1340px;top:303px;" width="8" height="8" viewBox="0 0 8 8"><path d="M0 1 H8 M0 3.500 H8 M0 6 H8" stroke="#6a6a6a" stroke-width="1"/><path d="M0 2 H8 M0 4.500 H8 M0 7 H8" stroke="#fff" stroke-width="1"/></svg>
<div class="a" style="left:926px;top:571px;width:409px;height:16px;background:linear-gradient(#e9e9e9,#f2f2f2 30%,#f4f4f4 100%)"></div>
<div class="a" style="left:1335px;top:571px;width:17px;height:16px;background:#f0f0f0"></div>
<svg class="a" style="left:931px;top:574px;" width="6" height="9" viewBox="0 0 6 9"><path d="M5 0.500 L1 4.500 L5 8.500 Z" fill="#3c3c3c"/></svg>
<svg class="a" style="left:1325px;top:574px;" width="6" height="9" viewBox="0 0 6 9"><path d="M1 0.500 L5 4.500 L1 8.500 Z" fill="#3c3c3c"/></svg>
<div class="a" style="left:952px;top:572px;width:339px;height:14px;border:1px solid #979797;border-radius:2px;background:linear-gradient(#f4f4f4 0,#ebebeb 45%,#d6d6d6 55%,#c9c9c9 100%);box-shadow:inset 0 0 0 1px rgba(255,255,255,.6)"></div>
<svg class="a" style="left:1117px;top:575px;" width="9" height="8" viewBox="0 0 9 8"><path d="M1 0 V8 M3.500 0 V8 M6 0 V8" stroke="#6a6a6a" stroke-width="1"/><path d="M2 0 V8 M4.500 0 V8 M7 0 V8" stroke="#fff" stroke-width="1"/></svg>
<!-- LOG -->
<div class="a" style="left:0px;top:599px;width:1360px;height:107px;border:1px solid #696969;border-right-width:2px;background:#fff"></div>
<span class="t" style="left:6.80px;top:605.84px;font-size:12px;transform:scaleX(0.8935);transform-origin:0 0;">Show in Log:</span>
<div class="a" style="left:84px;top:606px;width:12px;height:12px;border-radius:50%;border:2px solid #15182a;background:radial-gradient(circle at 38% 32%,#7d9be6 0,#3f5fc0 50%,#1b2c78 100%)"></div>
<span class="t" style="left:96.80px;top:605.84px;font-size:12px;transform:scaleX(0.8638);transform-origin:0 0;">Commands</span>
<div class="a" style="left:174.2px;top:606px;width:12px;height:12px;border-radius:50%;border:2px solid #2a3648;background:radial-gradient(circle at 50% 50%,#d4f6ff 0,#8fdcfc 55%,#5fb4e8 100%)"></div>
<span class="t" style="left:187.30px;top:605.84px;font-size:12px;transform:scaleX(0.8841);transform-origin:0 0;">Infos</span>
<div class="a" style="left:235px;top:606px;width:12px;height:12px;border-radius:50%;border:2px solid #2a3648;background:radial-gradient(circle at 50% 50%,#d4f6ff 0,#8fdcfc 55%,#5fb4e8 100%)"></div>
<span class="t" style="left:248.60px;top:605.84px;font-size:12px;transform:scaleX(0.8896);transform-origin:0 0;">Warnings</span>
<div class="a" style="left:318.2px;top:606px;width:12px;height:12px;border-radius:50%;border:2px solid #2a3648;background:radial-gradient(circle at 50% 50%,#d4f6ff 0,#8fdcfc 55%,#5fb4e8 100%)"></div>
<span class="t" style="left:331.80px;top:605.84px;font-size:12px;transform:scaleX(0.8111);transform-origin:0 0;">Errors</span>
<div class="a" style="left:383px;top:606px;width:12px;height:12px;border-radius:50%;border:2px solid #15182a;background:radial-gradient(circle at 38% 32%,#7d9be6 0,#3f5fc0 50%,#1b2c78 100%)"></div>
<span class="t" style="left:396.80px;top:605.84px;font-size:12px;transform:scaleX(0.8506);transform-origin:0 0;">ACK</span>
<div class="a" style="left:442px;top:606px;width:12px;height:12px;border-radius:50%;border:2px solid #2a3648;background:radial-gradient(circle at 50% 50%,#d4f6ff 0,#8fdcfc 55%,#5fb4e8 100%)"></div>
<span class="t" style="left:455.60px;top:605.84px;font-size:12px;transform:scaleX(0.8788);transform-origin:0 0;">Auto Scroll</span>
<svg class="a" style="left:533px;top:606px;" width="13" height="14" viewBox="0 0 13 14"><path d="M4 2.500 a1.500 1.500 0 0 1 1.500 -1.500 h2 a1.500 1.500 0 0 1 1.500 1.500" fill="none" stroke="#777" stroke-width="1"/><rect x="1" y="2.500" width="11" height="2" rx=".8" fill="#808080"/><path d="M2 5.500 H11 V12 a1 1 0 0 1 -1 1 H3 a1 1 0 0 1 -1 -1 Z" fill="#8c8c8c"/><path d="M4.300 6.500 V12 M6.500 6.500 V12 M8.700 6.500 V12" stroke="#e8e8e8" stroke-width=".9"/></svg>
<span class="t" style="left:548.05px;top:605.84px;font-size:12px;transform:scaleX(0.8745);transform-origin:0 0;">Clear Log</span>
<svg class="a" style="left:616px;top:606px;" width="14" height="14" viewBox="0 0 14 14"><path d="M1.500 3.500 H4 V1.500 H8.500 V8 H6 V10.500 H1.500 Z" fill="#fff" stroke="#555" stroke-width="1.100"/><path d="M6.500 5.500 H9.500 L12.500 7.500 V12.500 H6.500 Z" fill="#fff" stroke="#555" stroke-width="1.100"/></svg>
<span class="t" style="left:631.80px;top:605.84px;font-size:12px;transform:scaleX(0.8817);transform-origin:0 0;">Copy</span>
<div class="a" style="left:1px;top:625px;width:102px;height:80px;background:#5f9ea0"></div>
<div class="a" style="left:103px;top:625px;width:1240px;height:16px;background:#faf0e6"></div>
<div class="a" style="left:103px;top:657px;width:1240px;height:16px;background:#faf0e6"></div>
<span class="t" style="left:5.60px;top:627.51px;font-size:12.38px;color:#eef6f6;font-family:'Liberation Mono',monospace;">17:43:46.032</span>
<span class="t" style="left:108.60px;top:627.51px;font-size:12.38px;color:#2a2a8a;font-family:'Liberation Mono',monospace;">SD init fail</span>
<span class="t" style="left:5.60px;top:643.51px;font-size:12.38px;color:#eef6f6;font-family:'Liberation Mono',monospace;">17:43:46.046</span>
<span class="t" style="left:108.60px;top:643.51px;font-size:12.38px;color:#2a2a8a;font-family:'Liberation Mono',monospace;">FIRMWARE_NAME:RepetierMAX0.80 FIRMWARE_URL:Flashed from SeeMeCNC HQ PROTOCOL_VERSION:1.0 MACHINE_TYPE:RostockMAX EXTRUDER_COUNT:1 REPETIER_PROTOCOL:2</span>
<span class="t" style="left:5.60px;top:659.51px;font-size:12.38px;color:#eef6f6;font-family:'Liberation Mono',monospace;">17:43:46.046</span>
<span class="t" style="left:108.60px;top:659.51px;font-size:12.38px;color:#2a2a8a;font-family:'Liberation Mono',monospace;">Printed filament:0.00 m</span>
<span class="t" style="left:5.60px;top:675.51px;font-size:12.38px;color:#eef6f6;font-family:'Liberation Mono',monospace;">17:43:46.046</span>
<span class="t" style="left:108.60px;top:675.51px;font-size:12.38px;color:#2a2a8a;font-family:'Liberation Mono',monospace;">Printing time:0 days 0 hours 0 min</span>
<div class="a" style="left:1343px;top:625px;width:15px;height:80px;background:linear-gradient(to right,#e9e9e9,#f2f2f2 30%,#f4f4f4 100%)"></div>
<svg class="a" style="left:1346px;top:631px;" width="9" height="6" viewBox="0 0 9 6"><path d="M0.500 5 L4.500 1 L8.500 5 Z" fill="#3c3c3c"/></svg>
<svg class="a" style="left:1346px;top:693px;" width="9" height="6" viewBox="0 0 9 6"><path d="M0.500 1 L4.500 5 L8.500 1 Z" fill="#3c3c3c"/></svg>
<div class="a" style="left:1344px;top:672px;width:14px;height:14px;border:1px solid #979797;border-radius:2px;background:linear-gradient(to right,#f4f4f4 0,#ebebeb 45%,#d6d6d6 55%,#c9c9c9 100%);box-shadow:inset 0 0 0 1px rgba(255,255,255,.6)"></div>
<!-- STATUS -->
<div class="a" style="left:0px;top:706px;width:1360px;height:22px;background:#f1efee"></div>
<span class="t" style="left:4.30px;top:710.84px;font-size:12px;letter-spacing:-0.131px;">Connected</span>
<span class="t" style="left:68.80px;top:710.84px;font-size:12px;letter-spacing:-0.165px;">Extruder: 22.91°C/Off Bed: 22.91°C/Off</span>
<span class="t" style="left:284.80px;top:710.84px;font-size:12px;letter-spacing:0.140px;">1 Command Waiting</span>
<div class="a" style="left:401px;top:710px;width:214px;height:15px;border:1px solid #b2b2b2;border-radius:2px;background:linear-gradient(to right,rgba(160,160,160,.35) 0,rgba(255,255,255,0) 5px,rgba(255,255,255,0) 208px,rgba(160,160,160,.35) 100%),linear-gradient(#cfcfcf 0,#dedede 30%,#e4e4e4 60%,#d6d6d6 100%)"></div>
<span class="t" style="left:618.30px;top:710.84px;font-size:12px;letter-spacing:-0.911px;">1051 FPS</span>
<!-- TASKBAR -->
<div class="a" style="left:0px;top:728px;width:1360px;height:40px;background:linear-gradient(to right,#9e9e9e 0,#a6a6a6 30px,#928e8f 62px,#b6b6b6 92px,#c0c0c0 130px,#b4b4b4 165px,#8e8e8e 182px,#727272 202px,#3c3c3c 236px,#343434 250px,#2a2a2a 305px,#2c2c2c 340px,#313131 370px,#2c2c2c 430px,#323232 495px,#333 555px,#383838 620px,#2a2a2a 680px,#3a3a3a 698px,#666 722px,#808080 770px,#8a8a8a 810px,#848484 900px,#8c8c8c 1000px,#888888 1100px,#868686 1200px,#747474 1236px,#3e3e3e 1249px,#383a38 1262px,#345c4c 1271px,#3c7c62 1286px,#438a6c 1320px,#468e70 1345px,#468e70 1360px)"></div>
<div class="a" style="left:0px;top:728px;width:720px;height:40px;background:linear-gradient(to bottom,rgba(0,0,0,.28) 0,rgba(0,0,0,.08) 40%,rgba(255,255,255,.10) 100%);-webkit-mask-image:linear-gradient(to right,#000 0,#000 660px,transparent 720px);mask-image:linear-gradient(to right,#000 0,#000 660px,transparent 720px)"></div>
<div class="a" style="left:720px;top:728px;width:640px;height:40px;background:linear-gradient(to bottom,rgba(0,0,0,.10) 0,rgba(0,0,0,0) 30%,rgba(0,0,0,.05) 100%)"></div>
<div class="a" style="left:0px;top:728px;width:1360px;height:1px;background:#2e2e2e"></div>
<div class="a" style="left:0px;top:729px;width:1360px;height:1px;background:rgba(255,255,255,.28)"></div>
<svg class="a" style="left:0;top:730px" width="1360" height="38" viewBox="0 730 1360 38"><defs><filter id="bl" x="-20%" y="-50%" width="140%" height="200%"><feGaussianBlur stdDeviation="5"/></filter><filter id="bl2" x="-20%" y="-50%" width="140%" height="200%"><feGaussianBlur stdDeviation="3"/></filter></defs><g filter="url(#bl)"><path d="M40 730 L120 730 L60 768 L0 768 Z" fill="rgba(225,225,225,.45)"/><path d="M150 768 L240 730 L200 730 L100 768 Z" fill="rgba(40,40,40,.35)"/><path d="M100 770 L128 744 L165 738 L208 770 Z" fill="rgba(240,240,240,.75)"/><path d="M95 726 H250 V737 H95 Z" fill="rgba(50,50,50,.4)"/><path d="M48 735 L80 735 L70 752 L50 752 Z" fill="rgba(110,90,95,.5)"/></g><g filter="url(#bl2)"><path d="M700 728 L800 728 L756 755 L736 754 Z" fill="#6c74c6"/></g></svg>
<div class="a" style="left:246px;top:729.5px;width:58.5px;height:37px;border:1px solid rgba(225,225,225,.7);background:linear-gradient(135deg,rgba(165,165,165,.9) 0,rgba(125,125,125,.9) 45%,rgba(100,100,100,.9) 50%,rgba(105,105,105,.9) 100%);border-radius:3px;box-shadow:0 0 0 1px rgba(0,0,0,.6)"></div>
<div class="a" style="left:370px;top:729.5px;width:58.5px;height:37px;border:1px solid rgba(215,215,215,.6);background:linear-gradient(135deg,rgba(140,140,140,.75) 0,rgba(95,95,95,.6) 45%,rgba(50,50,50,.45) 50%,rgba(70,70,70,.5) 100%);border-radius:3px;box-shadow:0 0 0 1px rgba(0,0,0,.6)"></div>
<div class="a" style="left:432px;top:729.5px;width:58.5px;height:37px;border:1px solid rgba(215,215,215,.6);background:linear-gradient(135deg,rgba(140,140,140,.75) 0,rgba(95,95,95,.6) 45%,rgba(50,50,50,.45) 50%,rgba(70,70,70,.5) 100%);border-radius:3px;box-shadow:0 0 0 1px rgba(0,0,0,.6)"></div>
<div class="a" style="left:494px;top:729.5px;width:58.5px;height:37px;border:1px solid rgba(255,255,255,.75);background:linear-gradient(135deg,rgba(235,235,235,.85) 0,rgba(190,190,190,.85) 45%,rgba(150,150,150,.85) 50%,rgba(175,175,175,.85) 100%);border-radius:3px;box-shadow:0 0 0 1px rgba(0,0,0,.6)"></div>
<div class="a" style="left:556px;top:729.5px;width:58.5px;height:37px;border:1px solid rgba(215,215,215,.6);background:linear-gradient(135deg,rgba(140,140,140,.75) 0,rgba(95,95,95,.6) 45%,rgba(50,50,50,.45) 50%,rgba(70,70,70,.5) 100%);border-radius:3px;box-shadow:0 0 0 1px rgba(0,0,0,.6)"></div>
<div class="a" style="left:618px;top:729.5px;width:58.5px;height:37px;border:1px solid rgba(215,215,215,.6);background:linear-gradient(135deg,rgba(140,140,140,.75) 0,rgba(95,95,95,.6) 45%,rgba(50,50,50,.45) 50%,rgba(70,70,70,.5) 100%);border-radius:3px;box-shadow:0 0 0 1px rgba(0,0,0,.6)"></div>
<svg class="a" style="left:8px;top:729px;" width="38" height="38" viewBox="0 0 38 38"><defs><radialGradient id="orb" cx=".5" cy=".95" r=".8"><stop offset="0" stop-color="#2fd2f8"/><stop offset=".35" stop-color="#1486cc"/><stop offset=".7" stop-color="#0c5aa0"/><stop offset="1" stop-color="#0b4a86"/></radialGradient><linearGradient id="orbh" x1="0" y1="0" x2="0" y2="1"><stop offset="0" stop-color="#c9d4de"/><stop offset="1" stop-color="#8fa9c2"/></linearGradient></defs><circle cx="18.800" cy="19.200" r="18.200" fill="url(#orb)" stroke="#173a62" stroke-width="1"/><path d="M1.500 18.500 A17.300 17.300 0 0 1 36.100 18.500 Q19 15.500 1.500 18.500 Z" fill="url(#orbh)" opacity=".92"/><circle cx="18.800" cy="19.200" r="17.300" fill="none" stroke="rgba(255,255,255,.35)" stroke-width=".8"/><path d="M10.900 8.800 Q15 7 20 9.500 L18.800 17.200 Q14 15 9.500 17 Z" fill="#f26522"/><path d="M21.200 10.200 Q26 13 31.500 10.800 L30 19.500 Q25 21.500 20 18.500 Z" fill="#8dc63f"/><path d="M9 18.800 Q14 16.800 18.500 19 L17.200 27.300 Q12.500 25 7.500 27 Z" fill="#3a9fe6"/><path d="M19.800 20.200 Q24.500 23 29.800 21.200 L28.400 29.300 Q23.500 31.200 18.500 28.800 Z" fill="#fdb913"/></svg>
<svg class="a" style="left:73px;top:734px;" width="33" height="31" viewBox="0 0 33 31"><path d="M2 3 H15 L17 5 H29 a1.500 1.500 0 0 1 1.500 1.500 V25 H2 Z" fill="#f3d684" stroke="#d6b24e" stroke-width=".8"/><rect x="4" y="1.500" width="10" height="3" fill="#fff"/><rect x="4.500" y="1.800" width="3" height="2.200" fill="#2eaa3a"/><rect x="11" y="3.300" width="10" height="3" fill="#fff"/><rect x="12" y="3.600" width="3" height="2.200" fill="#d03a2a"/><rect x="18.500" y="5.300" width="10" height="3" fill="#fff"/><rect x="19.500" y="5.600" width="3" height="2.200" fill="#2a86d8"/><path d="M1.500 9 H31 V25.500 H1.500 Z" fill="#fbe8a6" stroke="#e0bf62" stroke-width=".8"/><path d="M5.500 19.500 a2 2 0 0 1 2 -2 H25 a2 2 0 0 1 2 2 V29.500 H21.500 V23.500 H11 V29.500 H5.500 Z" fill="#8ecbf0" stroke="#4f9fd6" stroke-width="1"/></svg>
<svg class="a" style="left:136px;top:736px;" width="28" height="27" viewBox="0 0 28 27"><rect x="5" y="1.500" width="21.500" height="22" fill="#9cc3e6" stroke="#6fa2d0" stroke-width=".8"/><rect x="1.500" y="2.500" width="22" height="23" fill="#a9cdec" stroke="#79acd8" stroke-width=".8"/><circle cx="12.500" cy="13.500" r="9.300" fill="#f0862a"/><circle cx="12.500" cy="13.500" r="9.300" fill="none" stroke="#f6a85a" stroke-width="1"/><path d="M9 8 L18.500 13.500 L9 19 Z" fill="#fff"/></svg>
<svg class="a" style="left:196px;top:732px;" width="36" height="34" viewBox="0 0 36 34"><defs><radialGradient id="ieg" cx=".5" cy=".85" r=".9"><stop offset="0" stop-color="#4cc8fb"/><stop offset=".5" stop-color="#1786d6"/><stop offset="1" stop-color="#0a4f9c"/></radialGradient></defs><path d="M27.300 16.800 A9 9 0 1 0 25.670 20.960" fill="none" stroke="url(#ieg)" stroke-width="6.400"/><path d="M10 16.900 H30.500" stroke="#1580d0" stroke-width="3.200"/><path d="M31.300 7.500 Q34.500 1.200 27.500 1.300 Q16 2 7 13 Q-1 23 3 28.500 Q7 32 16 28" fill="none" stroke="#d9a51c" stroke-width="3.600" stroke-linecap="round"/><path d="M31.300 7.500 Q34.500 1.200 27.500 1.300 Q16 2 7 13 Q-1 23 3 28.500 Q7 32 16 28" fill="none" stroke="#f7ca3a" stroke-width="2.400" stroke-linecap="round"/></svg>
<svg class="a" style="left:260px;top:733px;" width="30" height="30" viewBox="0 0 30 30"><circle cx="15" cy="15" r="14.300" fill="#e33b2e"/><path d="M15 15 L2.600 7.850 A14.300 14.300 0 0 0 9.500 28.200 L15 15 Z" fill="#32a350"/><path d="M15 15 L2.617 7.850 A14.300 14.300 0 0 0 8.500 27.740 L15.700 15.300 Z" fill="#32a350"/><path d="M29.300 15 A14.300 14.300 0 0 1 8.500 27.740 L15 15 L28.400 9.900 A14.300 14.300 0 0 1 29.300 15 Z" fill="#fcd209"/><path d="M15 8.500 H27.700 A14.300 14.300 0 0 1 15.500 29.290 L21 18 Z" fill="#fcd209"/><path d="M15 8.500 H27.740 A14.300 14.300 0 0 0 2.617 7.850 L9.300 18.300 Z" fill="#e33b2e"/><path d="M2.617 7.850 L9.370 18.250 L15.500 29.290 A14.300 14.300 0 0 1 2.617 7.850 Z" fill="#32a350"/><circle cx="15" cy="15" r="6.600" fill="#f4f4f4"/><circle cx="15" cy="15" r="5.300" fill="#3a7ed0"/></svg>
<svg class="a" style="left:322px;top:734px;" width="30" height="27" viewBox="0 0 30 27"><path d="M1.500 17.500 L13 11 L28.500 15 L17 24.500 Q15.500 25.500 13.500 24.800 Z" fill="#2a7ec4"/><path d="M1.500 14.500 L13 8 L28.500 12 L17 21.500 Q15.500 22.500 13.500 21.800 Z" fill="#d9262c"/><path d="M1.500 11.500 L13 5 L28.500 9 L17 18.500 Q15.500 19.500 13.500 18.800 Z" fill="#f9d71c"/><path d="M1.500 8 L13 1.500 Q14.500 1 16 1.300 L28.500 5 L17 15 Q15.500 16 13.500 15.300 Z" fill="#7fc241"/><path d="M1.500 8 L13 1.500 Q14.500 1 16 1.300 L28.500 5 L20 8 Z" fill="#93cf4d"/></svg>
<svg class="a" style="left:383px;top:732px;" width="32" height="32" viewBox="0 0 32 32"><defs><linearGradient id="stg" x1="0" y1="0" x2="0" y2="1"><stop offset="0" stop-color="#4a4846"/><stop offset="1" stop-color="#1b1b1b"/></linearGradient></defs><rect width="32" height="32" rx="5" fill="url(#stg)"/><circle cx="23" cy="11" r="5.600" fill="#cfcfcf"/><circle cx="23" cy="11" r="3.300" fill="#555"/><circle cx="23" cy="11" r="2.600" fill="#c4c4c4"/><circle cx="12.500" cy="22.500" r="4.600" fill="#cfcfcf"/><circle cx="12.500" cy="22.500" r="2.900" fill="#3a3a3a"/><path d="M0 14 L9.500 19 L14 18 L18.500 12.500 L22 16.500 L16.800 21 L15.500 26 L9 24 L0 19.500 Z" fill="#cfcfcf"/><circle cx="12.500" cy="22.500" r="2.300" fill="#454545"/></svg>
<svg class="a" style="left:445px;top:731px;" width="31" height="34" viewBox="0 0 31 34"><rect x="0.500" y="1" width="24.500" height="20" fill="#fff" stroke="#8d99b0" stroke-width=".8"/><rect x="0.500" y="1" width="24.500" height="3" fill="#7f8db0"/><path d="M3 8 H7 M3 11 H7 M3 14 H7" stroke="#8d99b0" stroke-width="1"/><path d="M8.500 4 V21" stroke="#c9d0e0" stroke-width=".8"/><path d="M10.500 17 Q10.500 12.500 15 12.500 Q19.500 12.500 19.500 17" fill="none" stroke="#222" stroke-width="1.800"/><path d="M2 17.500 L21 15.500 L28.500 18 V30 L10 32.500 L2 28.500 Z" fill="#d9242a"/><path d="M2 17.500 L21 15.500 L28.500 18 L10 21 Z" fill="#ee4a4a"/><path d="M10 21 V32.500" stroke="#a8161c" stroke-width=".8"/><rect x="5" y="21.500" width="1.800" height="3.600" fill="#eee"/><rect x="15" y="22" width="1.800" height="3.600" fill="#eee"/></svg>
<svg class="a" style="left:512px;top:733px;" width="23" height="30" viewBox="0 0 23 30"><path d="M11.500 1.500 Q13 5.500 18 9.500 Q22 13.500 22 18.500 Q22 28 11.500 28.500 Q1 28 1 18.500 Q1 13.500 5 9.500 Q10 5.500 11.500 1.500 Z" fill="#ededed" stroke="#bdbdbd" stroke-width="1"/><text x="11.700" y="25" font-family="Liberation Sans,sans-serif" font-weight="bold" font-size="17.500" fill="#e60012" stroke="#e60012" stroke-width="1.200" text-anchor="middle">R</text></svg>
<svg class="a" style="left:568px;top:731px;" width="34" height="34" viewBox="0 0 34 34"><circle cx="17" cy="17" r="16.400" fill="#0a979d"/><path d="M17 17 C13 9.500 3.500 10.500 3.500 17 C3.500 23.500 13 24.500 17 17 C21 9.500 30.500 10.500 30.500 17 C30.500 23.500 21 24.500 17 17 Z" fill="none" stroke="#e6fbfb" stroke-width="2.800"/><path d="M7.300 17 H12.300 M21.700 17 H26.700 M24.200 14.500 V19.500" stroke="#e6fbfb" stroke-width="1.700"/></svg>
<svg class="a" style="left:629px;top:731px;" width="36" height="34" viewBox="0 0 36 34"><path d="M2 22 Q1 12 12 8.500 Q24 5.500 29 11.500 Q33 17.500 27 24 Q21 29.500 13 29 Q9 28.500 9.500 25.500 Q10 22.500 7 23.500 Q3 25 2 22 Z" fill="#9cc8e8" stroke="#e4f0fa" stroke-width="1.300"/><circle cx="7.500" cy="17.500" r="2.500" fill="#e23b2a"/><circle cx="12.500" cy="12" r="2.500" fill="#5ab52e"/><circle cx="19.500" cy="10" r="2.500" fill="#f4c20d"/><circle cx="16" cy="19.500" r="2.300" fill="#3a6ea8"/><path d="M18.500 31.500 L26.500 10.500 L28.300 11.200 L20.300 32 Z" fill="#e08a2a"/><path d="M26 11 L27.500 2.500 Q30.500 1 33.500 4.500 L28.800 12 Z" fill="#d8b078"/></svg>
<svg class="a" style="left:1177px;top:746px;" width="9" height="6" viewBox="0 0 9 6"><path d="M0.500 5 L4.500 0.800 L8.500 5 Z" fill="#fff"/></svg>
<svg class="a" style="left:1197px;top:740px;" width="18" height="17" viewBox="0 0 18 17"><path d="M2 1 V16" stroke="#fff" stroke-width="1.800"/><path d="M3.500 2 Q7 0.500 9.500 2.500 Q12.500 4.500 16 3 L13.500 9.500 Q10.500 10.800 8.500 9 Q6 7.500 3.500 9 Z" fill="#fff"/></svg>
<svg class="a" style="left:1221px;top:743px;" width="18" height="12" viewBox="0 0 18 12"><rect x="1" y="9" width="2.200" height="2.500" fill="#fff"/><rect x="4.300" y="7" width="2.200" height="4.500" fill="#fff"/><rect x="7.600" y="5" width="2.200" height="6.500" fill="#fff"/><rect x="10.900" y="3" width="2.200" height="8.500" fill="#fff"/><rect x="14.200" y="0.500" width="2.400" height="11" fill="#fff"/></svg>
<svg class="a" style="left:1248px;top:742px;" width="14" height="15" viewBox="0 0 14 15"><path d="M1 5 H3.500 L7.500 1 V14 L3.500 10 H1 Z" fill="#fff"/><path d="M9.800 5.500 Q11.300 7.500 9.800 9.500" fill="none" stroke="#fff" stroke-width="1.100"/></svg>
<span class="t" style="left:1282.30px;top:735.14px;font-size:12px;letter-spacing:-0.129px;color:#fff;">5:57 p.m.</span>
<span class="t" style="left:1276.80px;top:751.34px;font-size:12px;letter-spacing:-0.118px;color:#fff;">10/12/2013</span>
<div class="a" style="left:1346px;top:729px;width:14px;height:39px;background:linear-gradient(to right,#62a487,#4f9878);border-left:1px solid rgba(255,255,255,.4);box-shadow:-1px 0 0 rgba(0,0,0,.4)"></div>
</body></html>
